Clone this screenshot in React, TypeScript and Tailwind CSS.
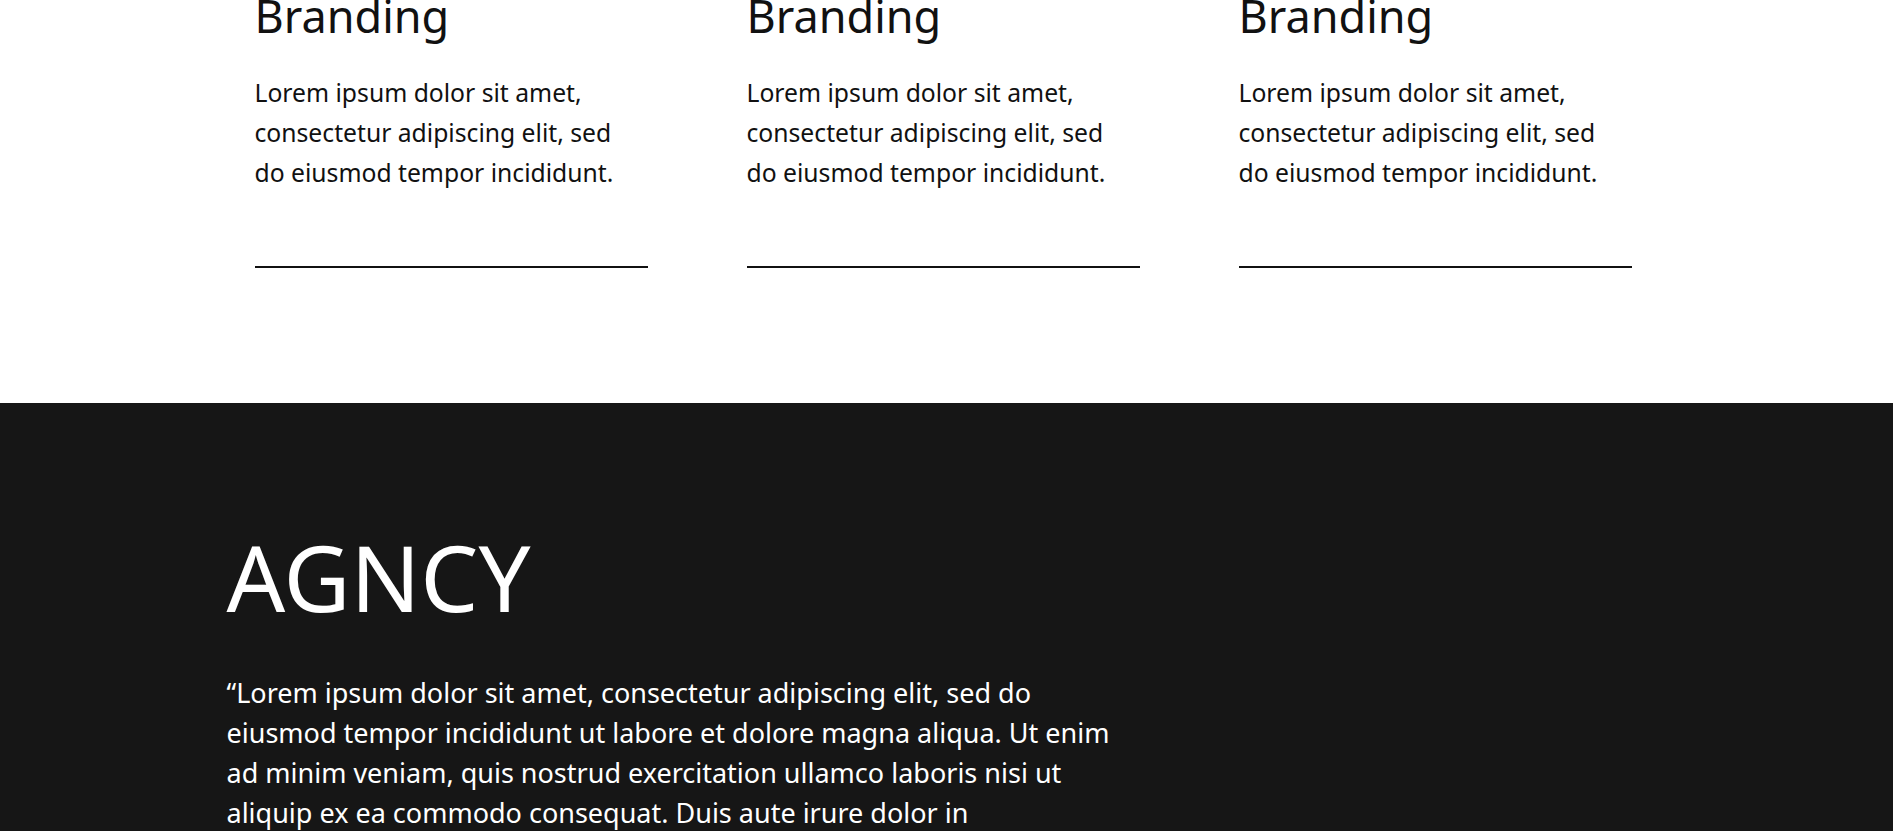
const services = [
  { title: 'Branding', text: 'Lorem ipsum dolor sit amet, consectetur adipiscing elit, sed do eiusmod tempor incididunt.' },
  { title: 'Branding', text: 'Lorem ipsum dolor sit amet, consectetur adipiscing elit, sed do eiusmod tempor incididunt.' },
  { title: 'Branding', text: 'Lorem ipsum dolor sit amet, consectetur adipiscing elit, sed do eiusmod tempor incididunt.' },
];

function ServiceCard({ title, text }: { title: string; text: string }) {
  return (
    <div className="flex flex-col">
      <h3 className="text-[45px] leading-[54px] font-normal text-[#111]">{title}</h3>
      <p className="mt-[30px] max-w-[370px] text-[24.7px] leading-[40px] text-[#111]">{text}</p>
      <div className="mt-[73px] h-[1.5px] w-full bg-[#111]" />
    </div>
  );
}

export default function App() {
  return (
    <div className="min-h-screen bg-white" style={{ fontFamily: '"Noto Sans", "Open Sans", sans-serif' }}>
      {/* Services */}
      <section className="bg-white pb-[135px]">
        <div className="mx-auto -mt-[11px] w-[1440px] pl-[28px]">
          <div className="grid grid-cols-[393px_393px_393px] gap-x-[99px]">
            {services.map((s, i) => (
              <ServiceCard key={i} title={s.title} text={s.text} />
            ))}
          </div>
        </div>
      </section>

      {/* About */}
      <section className="bg-[#161616] pt-[119px] pb-[140px]">
        <div className="mx-auto w-[1440px]">
          <h2 className="text-[92px] leading-[1.2] font-normal text-white">AGNCY</h2>
          <p className="mt-[41px] w-[900px] text-[27px] leading-[40px] text-white">
            “Lorem ipsum dolor sit amet, consectetur adipiscing elit, sed do eiusmod tempor incididunt ut labore et
            dolore magna aliqua. Ut enim ad minim veniam, quis nostrud exercitation ullamco laboris nisi ut aliquip ex
            ea commodo consequat. Duis aute irure dolor in reprehenderit in voluptate velit esse cillum dolore eu
            fugiat nulla pariatur.”
          </p>
        </div>
      </section>
    </div>
  );
}
